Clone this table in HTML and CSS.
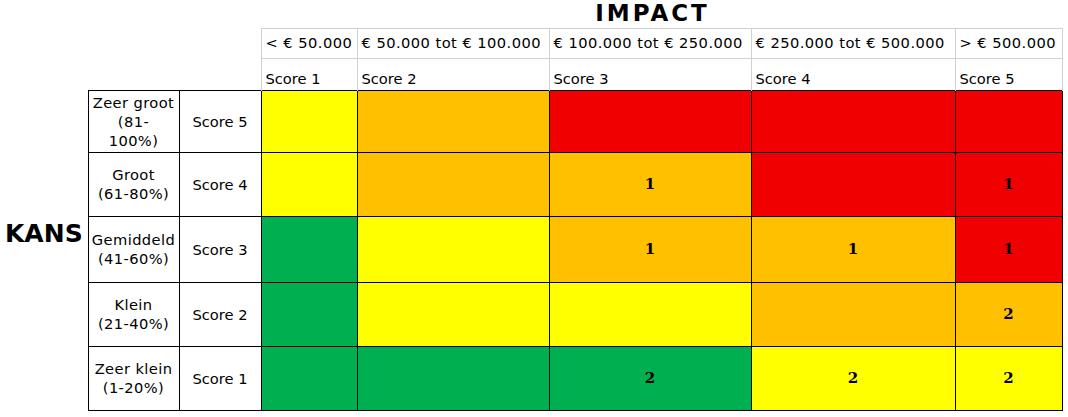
FILE: index.html
```html
<!DOCTYPE html>
<html lang="nl">
<head>
<meta charset="utf-8">
<title>Risicomatrix</title>
<link rel="stylesheet" href="styles.css">
</head>
<body>
<table class="matrix">
  <colgroup>
    <col class="c-kans">
    <col class="c-label">
    <col class="c-score">
    <col class="c-1">
    <col class="c-2">
    <col class="c-3">
    <col class="c-4">
    <col class="c-5">
  </colgroup>
  <thead>
    <tr class="r-title">
      <th colspan="5" class="blank"></th>
      <th class="title">IMPACT</th>
      <th colspan="2" class="blank"></th>
    </tr>
    <tr class="r-range">
      <th colspan="3" class="blank"></th>
      <th class="h">&lt; € 50.000</th>
      <th class="h">€ 50.000 tot € 100.000</th>
      <th class="h">€ 100.000 tot € 250.000</th>
      <th class="h">€ 250.000 tot € 500.000</th>
      <th class="h">&gt; € 500.000</th>
    </tr>
    <tr class="r-score">
      <th colspan="3" class="blank"></th>
      <th class="h">Score 1</th>
      <th class="h">Score 2</th>
      <th class="h">Score 3</th>
      <th class="h">Score 4</th>
      <th class="h">Score 5</th>
    </tr>
  </thead>
  <tbody>
    <tr class="r-d1">
      <td class="kans"></td>
      <td class="label">Zeer groot<br>(81-<br>100%)</td>
      <td class="score">Score 5</td>
      <td class="cell y"></td>
      <td class="cell o"></td>
      <td class="cell r"></td>
      <td class="cell r"></td>
      <td class="cell r"></td>
    </tr>
    <tr class="r-d2">
      <td class="kans"></td>
      <td class="label">Groot<br>(61-80%)</td>
      <td class="score">Score 4</td>
      <td class="cell y"></td>
      <td class="cell o"></td>
      <td class="cell o">1</td>
      <td class="cell r"></td>
      <td class="cell r">1</td>
    </tr>
    <tr class="r-d3">
      <td class="kans">KANS</td>
      <td class="label">Gemiddeld<br>(41-60%)</td>
      <td class="score">Score 3</td>
      <td class="cell g"></td>
      <td class="cell y"></td>
      <td class="cell o">1</td>
      <td class="cell o">1</td>
      <td class="cell r">1</td>
    </tr>
    <tr class="r-d4">
      <td class="kans"></td>
      <td class="label">Klein<br>(21-40%)</td>
      <td class="score">Score 2</td>
      <td class="cell g"></td>
      <td class="cell y"></td>
      <td class="cell y"></td>
      <td class="cell o"></td>
      <td class="cell o">2</td>
    </tr>
    <tr class="r-d5">
      <td class="kans"></td>
      <td class="label">Zeer klein<br>(1-20%)</td>
      <td class="score">Score 1</td>
      <td class="cell g"></td>
      <td class="cell g"></td>
      <td class="cell g">2</td>
      <td class="cell y">2</td>
      <td class="cell y">2</td>
    </tr>
  </tbody>
</table>
</body>
</html>
```
FILE: styles.css
```css
body {
  margin: 0;
  background: #ffffff;
  color: #000000;
  font-family: "DejaVu Sans", Verdana, sans-serif;
  font-size: 14.67px;
}

.matrix {
  border-collapse: collapse;
  table-layout: fixed;
  width: 1062px;
}

.c-kans { width: 88px; }
.c-label { width: 91px; }
.c-score { width: 82px; }
.c-1 { width: 96px; }
.c-2 { width: 192px; }
.c-3 { width: 202px; }
.c-4 { width: 204px; }
.c-5 { width: 107px; }

th, td {
  padding: 0;
}

.blank {
  border: none;
}

.r-title { height: 28px; }
.r-range { height: 30px; }
.r-score { height: 32px; }
.r-d1 { height: 62px; }
.r-d2 { height: 64px; }
.r-d3 { height: 66px; }
.r-d4 { height: 64px; }
.r-d5 { height: 64px; }

.title {
  font-size: 23px;
  font-weight: bold;
  letter-spacing: 3px;
  line-height: 27px;
  text-align: center;
  vertical-align: top;
  white-space: nowrap;
  padding-left: 5px;
}

.h {
  border: 1px solid #d0d0d0;
  font-weight: normal;
  text-align: left;
  vertical-align: middle;
  line-height: 18px;
  white-space: nowrap;
  padding: 0 4px;
}

.r-range .h {
  letter-spacing: 0.45px;
}

.r-score .h {
  border-bottom: none;
  vertical-align: bottom;
  padding-bottom: 2px;
}

.kans {
  border: none;
  font-size: 25px;
  font-weight: bold;
  text-align: left;
  vertical-align: top;
  padding: 3px 0 0 5px;
}

.label {
  border: 1px solid #000000;
  text-align: center;
  vertical-align: middle;
  line-height: 19px;
  letter-spacing: 0.4px;
}

.score {
  border: 1px solid #000000;
  text-align: center;
  vertical-align: middle;
  white-space: nowrap;
}

.cell {
  border: 1px solid #000000;
  text-align: center;
  vertical-align: middle;
  font-family: "DejaVu Serif", "Liberation Serif", serif;
  font-weight: bold;
  font-size: 15px;
}

.y { background: #ffff00; }
.o { background: #ffc000; }
.r { background: #f00000; }
.g { background: #00b050; }
```
